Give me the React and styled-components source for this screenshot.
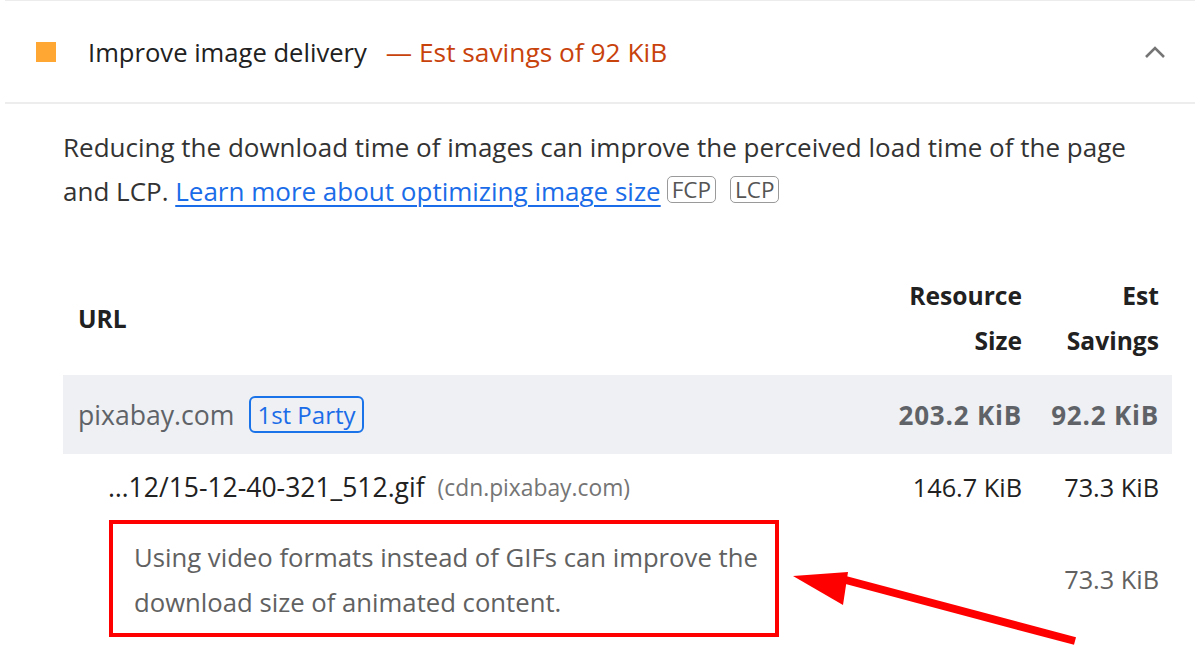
import React from "react";
import styled, { createGlobalStyle } from "styled-components";

const Global = createGlobalStyle`
  html, body { margin: 0; padding: 0; background: #fff; }
  body { font-family: "Open Sans", "Noto Sans", sans-serif; color: #212121; }
`;

const Page = styled.div`
  position: relative;
  width: 1200px;
  height: 658px;
  overflow: hidden;
  background: #fff;
`;

const Audit = styled.section`
  margin: 0 5px;
  border-top: 1px solid #ececec;
`;

const Header = styled.div`
  display: flex;
  align-items: center;
  height: 101px;
  padding: 0 28px 0 31px;
  border-bottom: 2px solid #ededed;
`;

const Square = styled.span`
  width: 20px;
  height: 20px;
  background: #ffa633;
  flex: none;
  margin-right: 32px;
`;

const Title = styled.div`
  flex: 1;
  font-size: 25.6px;
  color: #212121;
  line-height: 1;
  padding-top: 2px;
  white-space: nowrap;
`;

const Savings = styled.span`
  color: #c8420b;
  margin-left: 19px;
  font-size: 26.3px;
`;

const Chevron = styled.svg`
  width: 24px;
  height: 16px;
  flex: none;
`;

const Body = styled.div`
  padding: 21px 23px 0 58px;
`;

const Description = styled.p`
  margin: 0;
  width: 1080px;
  font-size: 26px;
  line-height: 44px;
  color: #333;
`;

const Line = styled.span`
  display: block;
`;

const Link = styled.a`
  color: #1a6ce8;
  text-decoration: underline;
  text-underline-offset: 4px;
  text-decoration-thickness: 2px;
`;

const Metric = styled.span`
  display: inline-block;
  font-size: 22.5px;
  line-height: 22px;
  padding: 2px 4px 1px;
  border: 1.5px solid #9a9a9a;
  border-radius: 5px;
  color: #555;
  margin-left: ${(p) => p.$gap || 6}px;
  vertical-align: 3px;
`;

const Table = styled.div`
  margin-top: 48px;
  display: grid;
  grid-template-columns: 1fr 150px 137px;
  padding-right: 13px;
`;

const HeadCell = styled.div`
  font-weight: 700;
  font-size: 24.6px;
  line-height: 45px;
  color: #212121;
  padding: 12px 0 12px ${(p) => (p.$first ? 15 : 0)}px;
  display: flex;
  align-items: center;
  justify-content: ${(p) => (p.$right ? "flex-end" : "flex-start")};
  text-align: ${(p) => (p.$right ? "right" : "left")};
`;

const GroupCell = styled.div`
  background: #eef0f3;
  height: 79px;
  display: flex;
  align-items: center;
  justify-content: ${(p) => (p.$right ? "flex-end" : "flex-start")};
  padding-left: ${(p) => (p.$first ? 15 : 0)}px;
  font-size: ${(p) => (p.$bold ? 26 : 26.6)}px;
  font-weight: ${(p) => (p.$bold ? 700 : 400)};
  letter-spacing: ${(p) => (p.$bold ? 0.8 : 0)}px;
  color: #5f6368;
  margin-right: ${(p) => (p.$last ? -13 : 0)}px;
  padding-right: ${(p) => (p.$last ? 13 : 0)}px;
  white-space: nowrap;
`;

const PartyBadge = styled.span`
  display: inline-block;
  margin-left: 15px;
  padding: 0 6px;
  line-height: 33px;
  border: 2px solid #1a73e8;
  border-radius: 6px;
  color: #1a6ce8;
  font-size: 24px;
  letter-spacing: 0;
`;

const ItemCell = styled.div`
  height: 66px;
  display: flex;
  align-items: center;
  justify-content: ${(p) => (p.$right ? "flex-end" : "flex-start")};
  padding-left: ${(p) => (p.$first ? 45 : 0)}px;
  font-size: ${(p) => (p.$first ? 26.5 : 25.3)}px;
  color: #212121;
  white-space: nowrap;
`;

const Host = styled.span`
  font-size: 22.8px;
  color: #757575;
  margin-left: 13px;
`;

const SubCell = styled.div`
  display: flex;
  align-items: center;
  justify-content: ${(p) => (p.$right ? "flex-end" : "flex-start")};
  padding-left: ${(p) => (p.$first ? 46 : 0)}px;
  font-size: 25.3px;
  color: #616161;
`;

const Highlight = styled.div`
  width: 670px;
  box-sizing: border-box;
  border: 4px solid #f00;
  padding: 11px 10px 8px 21px;
  font-size: 25.7px;
  line-height: 45px;
  color: #616161;
`;

const Arrow = styled.svg`
  position: absolute;
  left: 780px;
  top: 555px;
  width: 310px;
  height: 100px;
  overflow: visible;
`;

export default function App() {
  return (
    <Page>
      <Global />
      <Audit>
        <Header>
          <Square />
          <Title>
            Improve image delivery<Savings>— Est savings of 92 KiB</Savings>
          </Title>
          <Chevron viewBox="0 0 24 16">
            <path d="M3 13 L12 4 L21 13" fill="none" stroke="#757575" strokeWidth="2.6" />
          </Chevron>
        </Header>
        <Body>
          <Description>
            <Line>
              Reducing the download time of images can improve the perceived load time of the page
            </Line>
            <Line>
              and LCP. <Link href="#">Learn more about optimizing image size</Link>
              <Metric $gap={6}>FCP</Metric>
              <Metric $gap={14}>LCP</Metric>
            </Line>
          </Description>
          <Table>
            <HeadCell $first>URL</HeadCell>
            <HeadCell $right>
              Resource
              <br />
              Size
            </HeadCell>
            <HeadCell $right>
              Est
              <br />
              Savings
            </HeadCell>

            <GroupCell $first>
              pixabay.com<PartyBadge>1st Party</PartyBadge>
            </GroupCell>
            <GroupCell $right $bold>203.2 KiB</GroupCell>
            <GroupCell $right $bold $last>92.2 KiB</GroupCell>

            <ItemCell $first>
              …12/15-12-40-321_512.gif<Host>(cdn.pixabay.com)</Host>
            </ItemCell>
            <ItemCell $right>146.7 KiB</ItemCell>
            <ItemCell $right>73.3 KiB</ItemCell>

            <SubCell $first>
              <Highlight>
                Using video formats instead of GIFs can improve the download size of animated
                content.
              </Highlight>
            </SubCell>
            <SubCell />
            <SubCell $right>73.3 KiB</SubCell>
          </Table>
        </Body>
      </Audit>
      <Arrow viewBox="0 0 310 100">
        <path d="M295 86 L62 24" stroke="#f00" strokeWidth="8" strokeLinecap="butt" />
        <path d="M13 21 L68 17 L63 50 Z" fill="#f00" />
      </Arrow>
    </Page>
  );
}
